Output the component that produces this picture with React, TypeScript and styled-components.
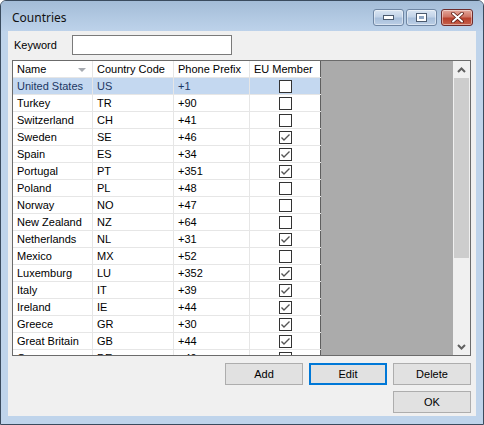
import React from 'react';
import styled, { createGlobalStyle } from 'styled-components';

interface ICountry {
  name: string;
  code: string;
  prefix: string;
  eu: boolean;
}

const COUNTRIES: ICountry[] = [
  { name: 'United States', code: 'US', prefix: '+1', eu: false },
  { name: 'Turkey', code: 'TR', prefix: '+90', eu: false },
  { name: 'Switzerland', code: 'CH', prefix: '+41', eu: false },
  { name: 'Sweden', code: 'SE', prefix: '+46', eu: true },
  { name: 'Spain', code: 'ES', prefix: '+34', eu: true },
  { name: 'Portugal', code: 'PT', prefix: '+351', eu: true },
  { name: 'Poland', code: 'PL', prefix: '+48', eu: false },
  { name: 'Norway', code: 'NO', prefix: '+47', eu: false },
  { name: 'New Zealand', code: 'NZ', prefix: '+64', eu: false },
  { name: 'Netherlands', code: 'NL', prefix: '+31', eu: true },
  { name: 'Mexico', code: 'MX', prefix: '+52', eu: false },
  { name: 'Luxemburg', code: 'LU', prefix: '+352', eu: true },
  { name: 'Italy', code: 'IT', prefix: '+39', eu: true },
  { name: 'Ireland', code: 'IE', prefix: '+44', eu: true },
  { name: 'Greece', code: 'GR', prefix: '+30', eu: true },
  { name: 'Great Britain', code: 'GB', prefix: '+44', eu: true },
  { name: 'Germany', code: 'DE', prefix: '+49', eu: true },
];

// column widths, name / code / prefix / eu
const COLS = [80, 81, 76, 71];

const GlobalStyle = createGlobalStyle`
  html, body {
    margin: 0;
    padding: 0;
    background: #ffffff;
  }
  * {
    box-sizing: border-box;
  }
`;

const Window = styled.div`
  width: 484px;
  height: 425px;
  display: flex;
  flex-direction: column;
  border: 1px solid #3a4b5e;
  border-radius: 6px 6px 0 0;
  background: #bfd4eb;
  overflow: hidden;
  font-family: 'Liberation Sans', Arial, sans-serif;
  font-size: 11px;
  color: #000;
`;

const TitleBar = styled.div`
  height: 30px;
  flex: none;
  display: flex;
  align-items: center;
  padding: 0 10px 0 11px;
  background: linear-gradient(to bottom, #a3bcd7 0%, #b3cae3 60%, #bdd2ea 100%);
`;

const Title = styled.div`
  flex: 1;
  font-family: 'Noto Sans', 'Open Sans', sans-serif;
  font-size: 12px;
  color: #111;
  padding-top: 2px;
`;

const CaptionButtons = styled.div`
  display: flex;
  gap: 2px;
  margin-top: 2px;
`;

const CaptionButton = styled.div<{ $close?: boolean }>`
  width: ${p => (p.$close ? '32px' : '31px')};
  height: 17px;
  display: flex;
  align-items: center;
  justify-content: center;
  border: 1px solid ${p => (p.$close ? '#6e2c2c' : '#6f86a3')};
  border-radius: 3px;
  margin-left: ${p => (p.$close ? '2px' : '0')};
  background: ${p =>
    p.$close
      ? 'linear-gradient(to bottom, #e4a89c 0%, #cf7565 45%, #b8402c 55%, #c6614b 100%)'
      : 'linear-gradient(to bottom, #dbe6f3 0%, #c2d3e8 45%, #a8bfdb 55%, #bccfe6 100%)'};
  box-shadow: inset 0 0 0 1px rgba(255, 255, 255, 0.45);
`;

const Frame = styled.div`
  flex: 1;
  display: flex;
  padding: 0 7px 8px 7px;
`;

const Client = styled.div`
  flex: 1;
  display: flex;
  flex-direction: column;
  background: #f0f0f0;
  padding: 4px 5px 0 4px;
`;

const KeywordRow = styled.div`
  display: flex;
  align-items: center;
  height: 20px;
`;

const Label = styled.label`
  width: 60px;
  padding-left: 2px;
`;

const TextBox = styled.input`
  width: 160px;
  height: 20px;
  border: 1px solid #7a7a7a;
  background: #fff;
  outline: none;
  font: inherit;
`;

const Grid = styled.div`
  margin-top: 5px;
  height: 296px;
  display: flex;
  border: 1px solid #6b6b6b;
  background: #ababab;
  overflow: hidden;
`;

const Table = styled.div`
  width: 308px;
  flex: none;
  display: flex;
  flex-direction: column;
  background: #fff;
  border-right: 1px solid #5f5f5f;
`;

const Row = styled.div<{ $selected?: boolean }>`
  height: 17px;
  flex: none;
  display: flex;
  background: ${p => (p.$selected ? '#c4d8f0' : '#fff')};
  color: ${p => (p.$selected ? '#1b3763' : '#000')};
`;

const Cell = styled.div<{ $w: number; $center?: boolean }>`
  width: ${p => p.$w}px;
  flex: none;
  display: flex;
  align-items: center;
  justify-content: ${p => (p.$center ? 'center' : 'flex-start')};
  padding-left: ${p => (p.$center ? '0' : '4px')};
  border-right: 1px solid #e6e6e6;
  border-bottom: 1px solid #e6e6e6;
  white-space: nowrap;
  overflow: hidden;
  &:last-child {
    border-right: none;
  }
`;

const HeaderCell = styled(Cell)`
  position: relative;
  border-bottom: 1px solid #e6e6e6;
`;

const SortGlyph = styled.span`
  position: absolute;
  right: 6px;
  top: 7px;
  width: 0;
  height: 0;
  border-left: 4px solid transparent;
  border-right: 4px solid transparent;
  border-top: 4px solid #a6aab0;
`;

const CheckBox = styled.div`
  width: 13px;
  height: 13px;
  border: 1px solid #333;
  background: #fff;
  display: flex;
  align-items: center;
  justify-content: center;
`;

const Filler = styled.div`
  flex: 1;
  background: #ababab;
`;

const ScrollBar = styled.div`
  width: 17px;
  flex: none;
  display: flex;
  flex-direction: column;
  background: #f0f0f0;
`;

const ScrollArrow = styled.div`
  height: 17px;
  flex: none;
  display: flex;
  align-items: center;
  justify-content: center;
`;

const ScrollThumb = styled.div`
  height: 180px;
  flex: none;
  margin: 0 1px;
  background: #cdcdcd;
`;

const ScrollTrack = styled.div`
  flex: 1;
`;

const ButtonRow = styled.div<{ $top: number }>`
  display: flex;
  justify-content: flex-end;
  gap: 6px;
  margin-top: ${p => p.$top}px;
`;

const Button = styled.button<{ $focused?: boolean }>`
  width: 78px;
  height: 22px;
  padding: 0;
  background: #e1e1e1;
  border: ${p => (p.$focused ? '2px solid #0078d7' : '1px solid #adadad')};
  font-family: 'Liberation Sans', Arial, sans-serif;
  font-size: 11px;
  color: #000;
`;

const Check = () => (
  <svg width="11" height="11" viewBox="0 0 11 11">
    <polyline
      points="1.5,5.5 4,8 9.5,2.5"
      fill="none"
      stroke="#555"
      strokeWidth="1.4"
    />
  </svg>
);

export default function App() {
  return (
    <>
      <GlobalStyle />
      <Window>
        <TitleBar>
          <Title>Countries</Title>
          <CaptionButtons>
            <CaptionButton>
              <svg width="11" height="5" viewBox="0 0 11 5">
                <rect x="0.5" y="0.5" width="10" height="4" fill="#fff" stroke="#4b5a6e" />
              </svg>
            </CaptionButton>
            <CaptionButton>
              <svg width="11" height="9" viewBox="0 0 11 9">
                <rect x="0.5" y="0.5" width="10" height="8" fill="#fff" stroke="#4b5a6e" />
                <rect x="3" y="3" width="5" height="3" fill="#8fa6c2" />
              </svg>
            </CaptionButton>
            <CaptionButton $close>
              <svg width="13" height="11" viewBox="0 0 13 11">
                <path
                  d="M2 1.5 L11 9.5 M11 1.5 L2 9.5"
                  stroke="#5a1a12"
                  strokeWidth="3.6"
                  strokeLinecap="round"
                />
                <path
                  d="M2 1.5 L11 9.5 M11 1.5 L2 9.5"
                  stroke="#fff"
                  strokeWidth="2"
                  strokeLinecap="round"
                />
              </svg>
            </CaptionButton>
          </CaptionButtons>
        </TitleBar>
        <Frame>
          <Client>
            <KeywordRow>
              <Label>Keyword</Label>
              <TextBox />
            </KeywordRow>
            <Grid>
              <Table>
                <Row>
                  <HeaderCell $w={COLS[0]}>
                    Name
                    <SortGlyph />
                  </HeaderCell>
                  <HeaderCell $w={COLS[1]}>Country Code</HeaderCell>
                  <HeaderCell $w={COLS[2]}>Phone Prefix</HeaderCell>
                  <HeaderCell $w={COLS[3]}>EU Member</HeaderCell>
                </Row>
                {COUNTRIES.map((c, i) => (
                  <Row key={c.code} $selected={i === 0}>
                    <Cell $w={COLS[0]}>{c.name}</Cell>
                    <Cell $w={COLS[1]}>{c.code}</Cell>
                    <Cell $w={COLS[2]}>{c.prefix}</Cell>
                    <Cell $w={COLS[3]} $center>
                      <CheckBox>{c.eu ? <Check /> : null}</CheckBox>
                    </Cell>
                  </Row>
                ))}
              </Table>
              <Filler />
              <ScrollBar>
                <ScrollArrow>
                  <svg width="9" height="6" viewBox="0 0 9 6">
                    <polyline points="1,5 4.5,1.5 8,5" fill="none" stroke="#606060" strokeWidth="2" />
                  </svg>
                </ScrollArrow>
                <ScrollThumb />
                <ScrollTrack />
                <ScrollArrow>
                  <svg width="9" height="6" viewBox="0 0 9 6">
                    <polyline points="1,1 4.5,4.5 8,1" fill="none" stroke="#606060" strokeWidth="2" />
                  </svg>
                </ScrollArrow>
              </ScrollBar>
            </Grid>
            <ButtonRow $top={7}>
              <Button>Add</Button>
              <Button $focused>Edit</Button>
              <Button>Delete</Button>
            </ButtonRow>
            <ButtonRow $top={6}>
              <Button>OK</Button>
            </ButtonRow>
          </Client>
        </Frame>
      </Window>
    </>
  );
}
